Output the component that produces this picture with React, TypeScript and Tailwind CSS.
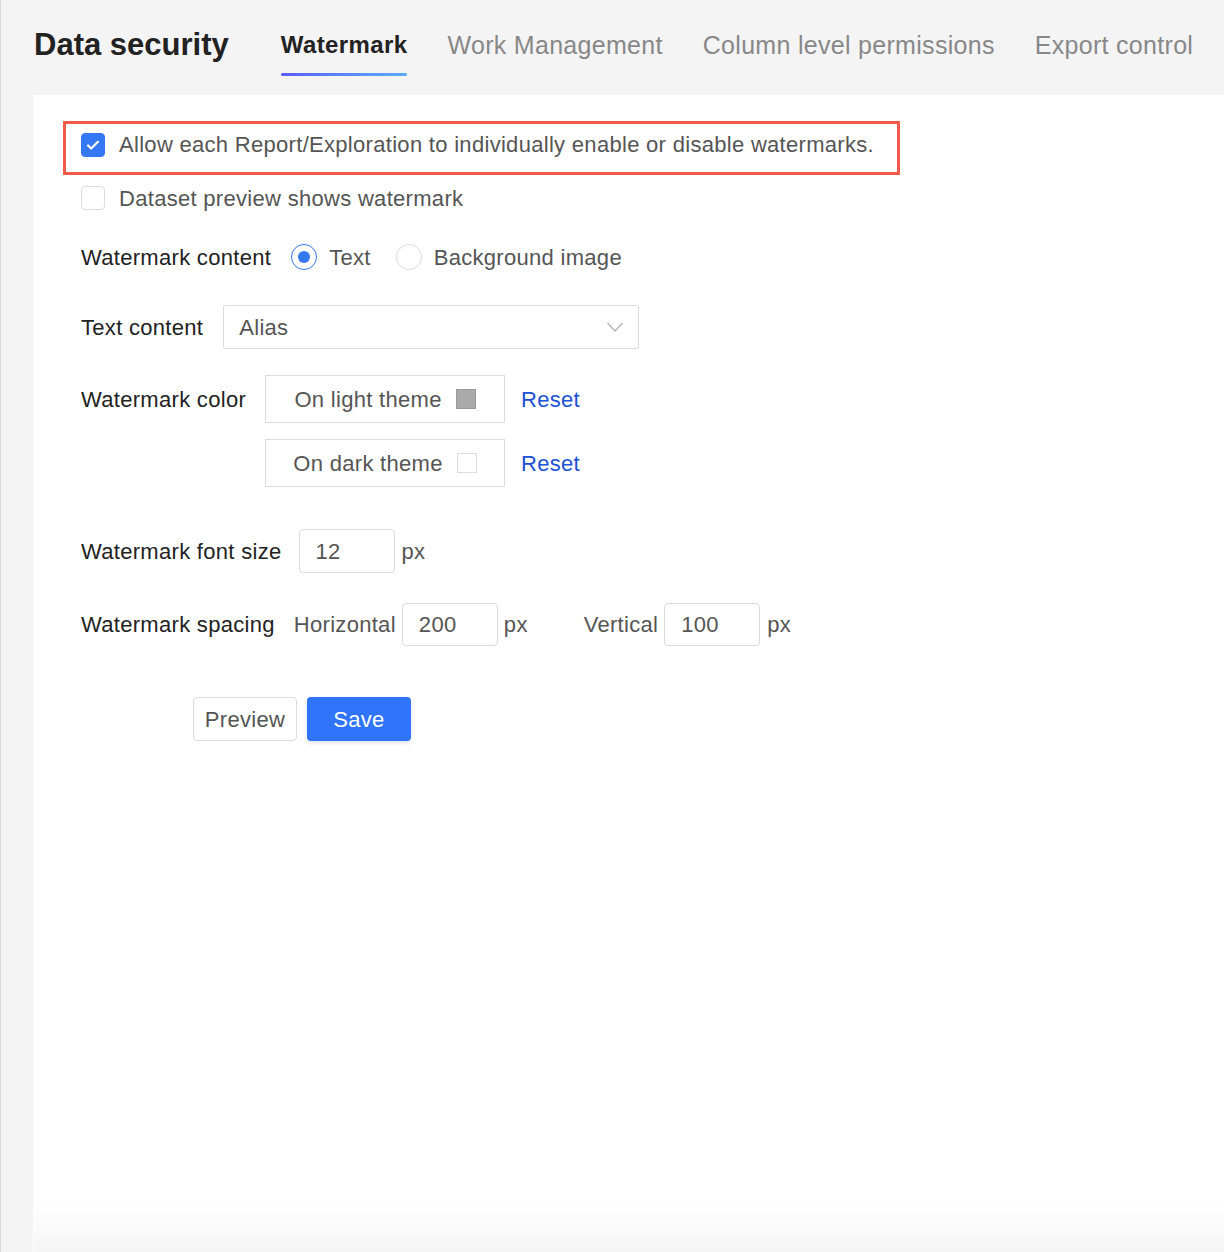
import { useState } from 'react';

const tabs = ['Watermark', 'Work Management', 'Column level permissions', 'Export control'];

const Checkbox = ({ checked }: { checked: boolean }) => (
  <span
    className={`flex h-[24px] w-[24px] shrink-0 items-center justify-center rounded-[4px] border ${
      checked ? 'border-[#3478f6] bg-[#3478f6]' : 'border-[#dcdcdc] bg-white'
    }`}
  >
    {checked && (
      <svg width="16" height="16" viewBox="0 0 16 16" fill="none">
        <path d="M3 8.4l3.2 3.1L13 4.8" stroke="white" strokeWidth="2.2" strokeLinecap="round" strokeLinejoin="round" />
      </svg>
    )}
  </span>
);

const Radio = ({ checked }: { checked: boolean }) => (
  <span
    className={`flex h-[26px] w-[26px] shrink-0 items-center justify-center rounded-full border bg-white ${
      checked ? 'border-[#3478f6]' : 'border-[#dcdcdc]'
    }`}
  >
    {checked && <span className="h-[12px] w-[12px] rounded-full bg-[#3478f6]" />}
  </span>
);

const NumberBox = ({ value, tall }: { value: string; tall?: boolean }) => (
  <div
    className={`flex w-[96px] items-center rounded-[4px] border border-[#dcdcdc] bg-white pl-[16px] text-[#555] ${
      tall ? 'h-[44px]' : 'h-[43px]'
    }`}
  >
    {value}
  </div>
);

const App = () => {
  const [active] = useState('Watermark');

  return (
    <div className="relative min-h-[1252px] border-l border-[#d9d9d9] bg-[#f4f4f4] font-['Liberation_Sans',Arial,sans-serif]">
      <div className="flex h-[95px] items-start pl-[33px]">
        <h1 className="mt-[27px] text-[31px] font-bold leading-[36px] text-[#222]">Data security</h1>
        <div className="ml-[52px] flex gap-[40px]">
          {tabs.map((tab) => (
            <div key={tab} className="flex flex-col items-stretch">
              <span
                className={`mt-[29px] leading-[32px] ${
                  tab === active
                    ? 'text-[24px] font-bold tracking-[0.4px] text-[#222]'
                    : 'text-[25px] tracking-[0.3px] text-[#888]'
                }`}
              >
                {tab}
              </span>
              {tab === active && (
                <span className="mt-[12px] h-[3px] rounded-full bg-gradient-to-r from-[#5a5cf8] to-[#5aabf8]" />
              )}
            </div>
          ))}
        </div>
      </div>

      <div className="ml-[32px] min-h-[1157px] bg-white pl-[30px] pt-[26px] text-[22px] tracking-[0.3px]">
        <div className="inline-flex h-[54px] items-start gap-[14px] border-[3px] border-[#f25a4b] pl-[15px] pr-[23px] pt-[9px] text-[#555]">
          <Checkbox checked />
          <span className="leading-[24px]">
            Allow each Report/Exploration to individually enable or disable watermarks.
          </span>
        </div>

        <div className="ml-[18px]">
          <div className="mt-[11px] flex h-[24px] items-center gap-[14px] text-[#555]">
            <Checkbox checked={false} />
            <span>Dataset preview shows watermark</span>
          </div>

          <div className="mt-[34px] flex h-[26px] items-center">
            <span className="text-[#222]">Watermark content</span>
            <div className="ml-[20px] flex items-center gap-[12px]">
              <Radio checked />
              <span className="text-[#555]">Text</span>
            </div>
            <div className="ml-[25px] flex items-center gap-[12px]">
              <Radio checked={false} />
              <span className="text-[#555]">Background image</span>
            </div>
          </div>

          <div className="mt-[35px] flex items-center gap-[20px]">
            <span className="text-[#222]">Text content</span>
            <div className="flex h-[44px] w-[416px] items-center justify-between rounded-[2px] border border-[#dcdcdc] pl-[15px] pr-[14px] text-[#555]">
              <span>Alias</span>
              <svg width="18" height="12" viewBox="0 0 18 12" fill="none">
                <path d="M1.5 2l7.5 8 7.5-8" stroke="#b5b5b5" strokeWidth="1.3" />
              </svg>
            </div>
          </div>

          <div className="mt-[26px] flex items-start gap-[19px]">
            <span className="flex h-[48px] items-center text-[#222]">Watermark color</span>
            <div className="flex flex-col gap-[16px]">
              {[
                { label: 'On light theme', swatch: 'border-[#9a9a9a] bg-[#aaaaaa]' },
                { label: 'On dark theme', swatch: 'border-[#dcdcdc] bg-white' },
              ].map((c) => (
                <div key={c.label} className="flex items-center gap-[16px]">
                  <div className="flex h-[48px] w-[240px] items-center justify-center gap-[14px] border border-[#dcdcdc] text-[#555]">
                    <span>{c.label}</span>
                    <span className={`h-[20px] w-[20px] border ${c.swatch}`} />
                  </div>
                  <span className="text-[#2052d6]">Reset</span>
                </div>
              ))}
            </div>
          </div>

          <div className="mt-[42px] flex items-center">
            <span className="text-[#222]">Watermark font size</span>
            <div className="ml-[17px]">
              <NumberBox value="12" tall />
            </div>
            <span className="ml-[7px] text-[#555]">px</span>
          </div>

          <div className="mt-[30px] flex items-center">
            <span className="text-[#222]">Watermark spacing</span>
            <span className="ml-[19px] text-[#555]">Horizontal</span>
            <div className="ml-[6px]">
              <NumberBox value="200" />
            </div>
            <span className="ml-[6px] text-[#555]">px</span>
            <span className="ml-[56px] text-[#555]">Vertical</span>
            <div className="ml-[6px]">
              <NumberBox value="100" />
            </div>
            <span className="ml-[7px] text-[#555]">px</span>
          </div>

          <div className="ml-[112px] mt-[51px] flex gap-[10px]">
            <button className="h-[44px] w-[104px] rounded-[4px] border border-[#dcdcdc] bg-white text-[#555]">
              Preview
            </button>
            <button className="h-[44px] w-[104px] rounded-[4px] bg-[#2f74fb] text-white shadow-[0_2px_4px_rgba(0,0,0,0.12)]">
              Save
            </button>
          </div>
        </div>
      </div>

      <div className="pointer-events-none absolute bottom-0 left-[33px] right-0 h-[50px] bg-gradient-to-t from-[#f5f5f5] to-transparent" />
    </div>
  );
};

export default App;
